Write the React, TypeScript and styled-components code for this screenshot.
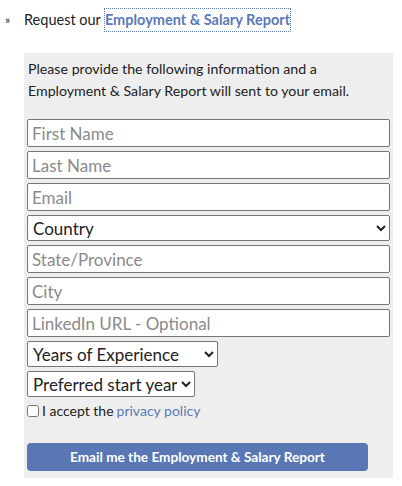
import React from "react";
import styled, { createGlobalStyle } from "styled-components";

const GlobalStyle = createGlobalStyle`
  body {
    margin: 0;
    background: #ffffff;
    font-family: Lato, "Noto Sans", sans-serif;
    color: #222;
  }
`;

const Page = styled.div`
  padding: 9px 0 0 5px;
  width: 388px;
`;

const Intro = styled.div`
  display: flex;
  align-items: center;
  font-size: 14.5px;
  line-height: 22px;
`;

const Bullet = styled.span`
  width: 19px;
  font-size: 12px;
`;

const ReportLink = styled.a`
  color: #5a7ab8;
  font-weight: bold;
  text-decoration: none;
  outline: 1px dotted #5a7ab8;
  margin-left: 4px;
`;

const Panel = styled.div`
  margin: 22px 0 0 19px;
  background: #eeeeee;
  padding: 5px 2px 7px 3px;
`;

const Notice = styled.p`
  margin: 0 0 17px 1px;
  font-size: 14.2px;
  line-height: 22px;
  color: #222;
`;

const Fields = styled.div`
  display: flex;
  flex-direction: column;
  align-items: flex-start;
  gap: 4px;
`;

const TextField = styled.input`
  box-sizing: border-box;
  width: 363px;
  height: 28px;
  margin: 0;
  padding: 0 4px;
  border: 1px solid #767676;
  border-radius: 2px;
  background: #fff;
  font-family: inherit;
  font-size: 17px;
  color: #333;
  &::placeholder {
    color: #8a8a8a;
  }
`;

const Select = styled.select<{ $w: number }>`
  box-sizing: border-box;
  width: ${(p) => p.$w}px;
  height: 26px;
  margin: 0;
  padding: 0 1px;
  border: 1px solid #767676;
  border-radius: 2px;
  background: #fff;
  font-family: inherit;
  font-size: 17px;
  color: #222;
`;

const Agree = styled.label`
  display: flex;
  align-items: center;
  gap: 3px;
  margin-top: 2px;
  font-size: 14px;
  line-height: 16px;
  color: #222;
  input {
    margin: 0;
    width: 12px;
    height: 12px;
  }
  a {
    color: #5a7ab8;
    text-decoration: none;
  }
`;

const Submit = styled.button`
  margin-top: 20px;
  width: 341px;
  height: 28px;
  border: none;
  border-radius: 4px;
  background: #5877b4;
  color: #fff;
  font-family: inherit;
  font-weight: bold;
  font-size: 13.6px;
`;

export default function App() {
  return (
    <Page>
      <GlobalStyle />
      <Intro>
        <Bullet>»</Bullet>
        Request our
        <ReportLink href="#">Employment &amp; Salary Report</ReportLink>
      </Intro>
      <Panel>
        <Notice>
          Please provide the following information and a Employment &amp; Salary Report will sent to your email.
        </Notice>
        <Fields>
          <TextField placeholder="First Name" />
          <TextField placeholder="Last Name" />
          <TextField placeholder="Email" />
          <Select $w={363}>
            <option>Country</option>
          </Select>
          <TextField placeholder="State/Province" />
          <TextField placeholder="City" />
          <TextField placeholder="LinkedIn URL - Optional" />
          <Select $w={191}>
            <option>Years of Experience</option>
          </Select>
          <Select $w={168}>
            <option>Preferred start year</option>
          </Select>
          <Agree>
            <input type="checkbox" />
            I accept the <a href="#">privacy policy</a>
          </Agree>
          <Submit>Email me the Employment &amp; Salary Report</Submit>
        </Fields>
      </Panel>
    </Page>
  );
}
